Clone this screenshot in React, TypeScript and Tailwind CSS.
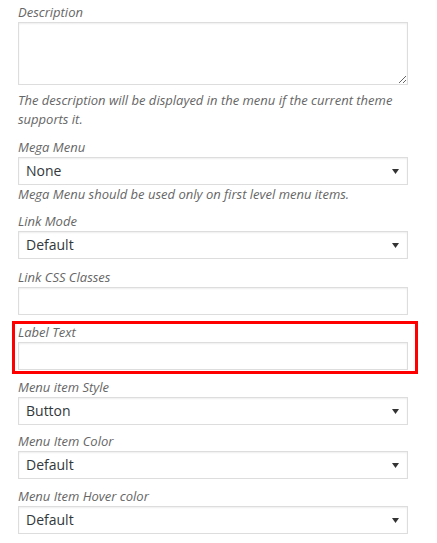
import React from "react";

const labelCls = "block h-[20px] leading-[20px] text-[13px] italic text-[#666]";
const helpCls = "text-[13px] leading-[19px] italic text-[#666]";
const boxCls =
  "w-[390px] h-[28px] border border-[#ddd] bg-white shadow-[inset_0_1px_2px_rgba(0,0,0,0.07)]";

function Select({ value }: { value: string }) {
  return (
    <div className={`${boxCls} flex items-center justify-between pl-[7px] pr-[8px]`}>
      <span className="text-[14px] text-[#32373c] leading-[20px]">{value}</span>
      <svg width="7" height="5" viewBox="0 0 7 5" className="block">
        <path d="M0 0 H7 L3.5 5 Z" fill="#333" />
      </svg>
    </div>
  );
}

function Field({
  label,
  children,
  className = "",
}: {
  label: string;
  children: React.ReactNode;
  className?: string;
}) {
  return (
    <div className={`flex flex-col ${className}`}>
      <span className={labelCls}>{label}</span>
      {children}
    </div>
  );
}

export default function App() {
  return (
    <div className="w-[437px] h-[543px] bg-white pl-[18px] pt-[2px] font-['Open_Sans',sans-serif]">
      <div className="w-[390px] flex flex-col">
        <Field label="Description">
          <textarea className="block w-[390px] h-[63px] border border-[#ddd] bg-white shadow-[inset_0_1px_2px_rgba(0,0,0,0.07)] outline-none" />
          <p className={`${helpCls} mt-[6px]`}>
            The description will be displayed in the menu if the current theme supports it.
          </p>
        </Field>

        <Field label="Mega Menu" className="mt-[8px]">
          <Select value="None" />
          <p className={helpCls}>Mega Menu should be used only on first level menu items.</p>
        </Field>

        <Field label="Link Mode" className="mt-[7px]">
          <Select value="Default" />
        </Field>

        <Field label="Link CSS Classes" className="mt-[8px]">
          <div className={boxCls} />
        </Field>

        <div className="relative mt-[7px]">
          <Field label="Label Text">
            <div className={boxCls} />
          </Field>
          <div className="absolute left-[-6px] right-[-10px] top-[-1px] bottom-[-4px] border-[3px] border-[#ff0000] pointer-events-none" />
        </div>

        <Field label="Menu item Style" className="mt-[7px]">
          <Select value="Button" />
        </Field>

        <Field label="Menu Item Color" className="mt-[6px]">
          <Select value="Default" />
        </Field>

        <Field label="Menu Item Hover color" className="mt-[7px]">
          <Select value="Default" />
        </Field>
      </div>
    </div>
  );
}
